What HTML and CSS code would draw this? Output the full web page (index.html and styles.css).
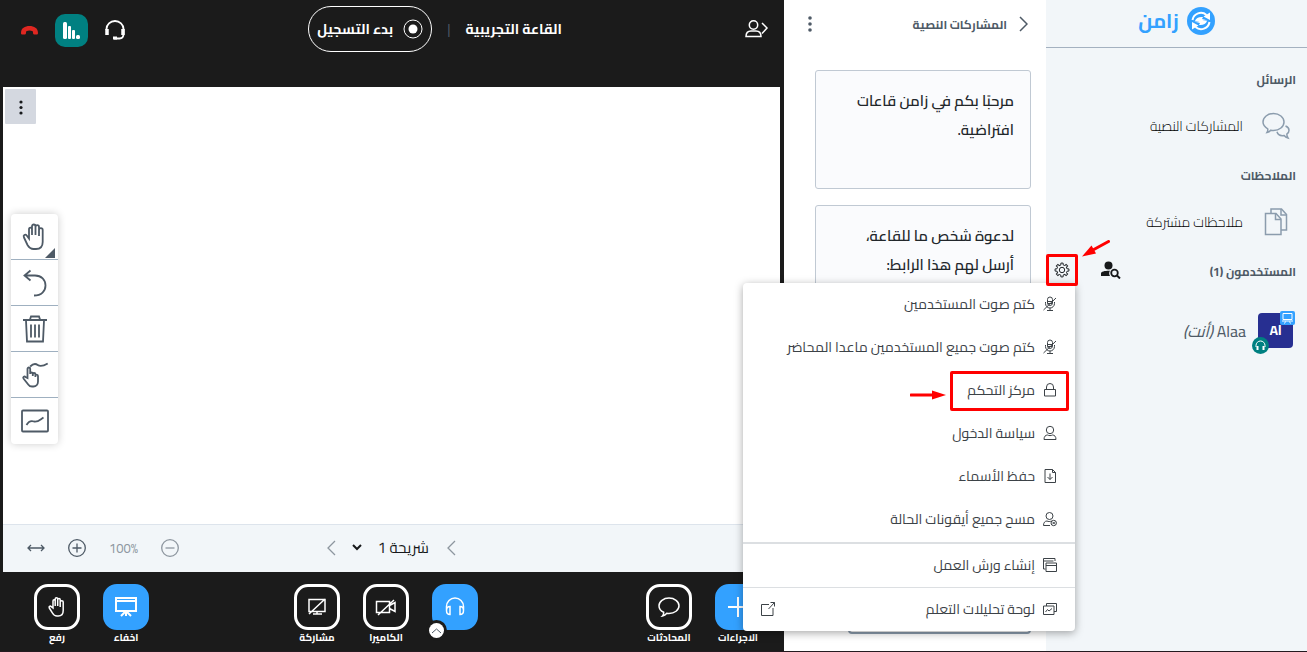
FILE: index.html
```html
<!DOCTYPE html>
<html lang="ar" dir="rtl">
<head>
    <meta charset="UTF-8"/>
    <meta name="viewport" content="width=device-width, initial-scale=1"/>
    <title>زامن</title>
    <link rel="stylesheet" href="styles.css">
</head>
<body>

<!-- users sidebar -->
<aside class="sidebar">
    <div class="brand">
        <svg class="brand-mark" width="28" height="28" viewBox="0 0 28 28">
            <circle cx="14" cy="14" r="14" fill="#33a1ff"/>
            <g fill="none" stroke="#fff" stroke-width="2">
                <path d="M5.500 13a8.500 8.500 0 0 1 14-5"/>
                <path d="M22.500 15a8.500 8.500 0 0 1-14 5"/>
            </g>
            <g fill="#fff">
                <path d="M16.500 9.500l6.500-4v7.500z"/>
                <path d="M11.500 18.500l-6.500 4V15z"/>
                <path d="M8 14c1-3 4-4.500 8-4l-1 2 6 1.500c-4 0-5 .5-7 .5z"/>
                <path d="M20 14c-1 3-4 4.500-8 4l1-2-6-1.500c4 0 5-.5 7-.5z"/>
            </g>
        </svg>
        <span>زامن</span>
    </div>

    <h2 class="side-title">الرسائل</h2>
    <a class="side-row" href="#">
        <span class="side-icon">
            <svg width="28" height="28" viewBox="0 0 28 28" class="line">
                <path d="M5 20.500c.8-1.300 1-2.300.7-3.700C3 15.200 1 12.800 1 10 1 5.300 5.700 1.500 11.500 1.500S22 5.300 22 10s-4.700 8.500-10.500 8.500c-1 0-1.800-.1-2.700-.3-1 1.200-2.200 2-3.800 2.300z"/>
                <path d="M23.500 14c2.200.8 3.500 2.300 3.500 4.200 0 1.800-.8 3-2.200 3.900 0 1.500.4 2.700 1.200 3.900-1.700-.4-2.900-1.200-3.800-2.500-3.500.6-6.400-.8-7.200-3.700"/>
            </svg>
        </span>
        <span>المشاركات النصية</span>
    </a>

    <h2 class="side-title">الملاحظات</h2>
    <a class="side-row" href="#">
        <span class="side-icon">
            <svg width="24" height="28" viewBox="0 0 24 28" class="line">
                <path d="M7 5V1h10.500l5 5.500V22H17"/>
                <path d="M17 1v6h5.500"/>
                <path d="M1.500 5.500H12l5 5.500v15.500H1.500z"/>
                <path d="M11.500 5.500v6H17"/>
            </svg>
        </span>
        <span>ملاحظات مشتركة</span>
    </a>

    <div class="users-head">
        <h2 class="side-title">المستخدمون (1)</h2>
        <button class="bare search" aria-label="بحث">
            <svg width="20" height="18" viewBox="0 0 20 18">
                <circle cx="7.500" cy="4.500" r="4" fill="#17191b"/>
                <path d="M0 15v-2.500C0 10.500 4 9.700 9 9.800 7.800 11.500 8 13.500 9 15z" fill="#17191b"/>
                <circle cx="13.500" cy="12" r="3.300" fill="none" stroke="#17191b" stroke-width="1.800"/>
                <path d="M16 14.500l3 3" stroke="#17191b" stroke-width="2"/>
            </svg>
        </button>
        <div class="manage">
            <button class="bare gear marked" aria-label="إدارة المستخدمين">
                <svg width="16" height="16" viewBox="-8 -8 16 16" fill="none" stroke="#22272b">
                    <defs>
                        <path id="tooth" d="M5.070-1.170L6.910-1.100V1.100L5.070 1.170A5.200 5.200 0 0 1 4.410 2.760"/>
                    </defs>
                    <use href="#tooth"/>
                    <use href="#tooth" transform="rotate(45)"/>
                    <use href="#tooth" transform="rotate(90)"/>
                    <use href="#tooth" transform="rotate(135)"/>
                    <use href="#tooth" transform="rotate(180)"/>
                    <use href="#tooth" transform="rotate(225)"/>
                    <use href="#tooth" transform="rotate(270)"/>
                    <use href="#tooth" transform="rotate(315)"/>
                    <circle r="2.700"/>
                </svg>
            </button>

            <ul class="menu">
                <li><button>
                    <svg width="14" height="16" viewBox="0 0 14 16"><path d="M4.500 7V3.500a2.500 2.500 0 0 1 5 0V7a2.500 2.500 0 0 1-5 0z"/><path d="M2.500 6v1.500a4.500 4.500 0 0 0 9 0V6M7 12v2.500M4 14.500h6M.5 14L13 2M5 5.500h4M5 7.500h4"/></svg>
                    كتم صوت المستخدمين</button></li>
                <li><button>
                    <svg width="14" height="16" viewBox="0 0 14 16"><path d="M4.500 7V3.500a2.500 2.500 0 0 1 5 0V7a2.500 2.500 0 0 1-5 0z"/><path d="M2.500 6v1.500a4.500 4.500 0 0 0 9 0V6M7 12v2.500M4 14.500h6M.5 14L13 2M5 5.500h4M5 7.500h4"/></svg>
                    كتم صوت جميع المستخدمين ماعدا المحاضر</button></li>
                <li><button>
                    <svg width="14" height="16" viewBox="0 0 14 16"><path d="M1.500 7.500h11v6.500h-11zM3.500 7.500V5a3.500 3.500 0 0 1 7 0v2.500"/></svg>
                    مركز التحكم</button>
                    <span class="mark"></span>
                    <svg class="arrow-row" width="36" height="10" viewBox="0 0 36 10"><path class="shaft" d="M1 5h24"/><path class="head" d="M22 0.500L36 5 22 9.500z"/></svg>
                </li>
                <li><button>
                    <svg width="14" height="16" viewBox="0 0 14 16"><circle cx="7" cy="5" r="3.700"/><path d="M1 14.500c0-3 1.500-4.500 3.500-4.500 1.500.8 3.500.8 5 0 2 0 3.500 1.500 3.500 4.500z"/></svg>
                    سياسة الدخول</button></li>
                <li><button>
                    <svg width="14" height="16" viewBox="0 0 14 16"><path d="M2 1.500h7.500l3 3v10H2zM9.500 1.500v3h3M7 5.500v6M4.500 9L7 11.500 9.500 9"/></svg>
                    حفظ الأسماء</button></li>
                <li><button>
                    <svg width="14" height="16" viewBox="0 0 14 16"><circle cx="6.500" cy="5" r="3.500"/><path d="M7 14.500H.5c0-3 1.500-4.500 3.500-4.500 1.300.7 3 .7 4.500 0"/><circle cx="10.700" cy="12" r="2.700"/><path d="M9.500 10.800l2.400 2.400M11.900 10.800l-2.400 2.400"/></svg>
                    مسح جميع أيقونات الحالة</button></li>
                <li class="group"><button>
                    <svg width="14" height="16" viewBox="0 0 14 16"><path d="M2.500 12H.5V1.500h11.500V4M.5 4h10M3 6h10.500v8.500H3zM3 8.500h10.500"/></svg>
                    إنشاء ورش العمل</button></li>
                <li class="split"><button>
                    <svg width="14" height="16" viewBox="0 0 14 16"><path d="M3.500 5V2.500h10v8H11M.5 5H11v8.500H.5zM2.500 11l2-2.500 1.500 1.500 3-2.500"/></svg>
                    لوحة تحليلات التعلم
                    <svg class="external" width="16" height="16" viewBox="0 0 16 16"><path d="M9 3.500H1.500v11H13V7M8.500 8l6-6.500M10.500 1.500h4v4"/></svg></button></li>
            </ul>

            <svg class="arrow-gear" width="28" height="18" viewBox="0 0 28 18"><path class="shaft" d="M26.500 1.500L10 10.500"/><path class="head" d="M0 16.500L9.500 5.500l4.500 8z"/></svg>
        </div>
    </div>

    <div class="user">
        <span class="avatar">Al
            <svg class="badge-presenter" width="15" height="14" viewBox="0 0 15 14"><rect width="15" height="14" rx="2" fill="#33a1ff"/><path d="M3 2.500h9v6H3zM2 10h11M4.500 12.500l1-2M10.500 12.500l-1-2" fill="none" stroke="#fff"/></svg>
            <svg class="badge-audio" width="17" height="17" viewBox="0 0 17 17"><circle cx="8.500" cy="8.500" r="8.500" fill="#008081"/><path d="M4 10V8.500a4.500 4.500 0 0 1 9 0V10" fill="none" stroke="#fff"/><path d="M5.500 9v4M11.500 9v4" fill="none" stroke="#fff" stroke-width="2"/></svg>
        </span>
        <span>Alaa <i>(أنت)</i></span>
    </div>
</aside>

<!-- public chat -->
<section class="chat">
    <header class="chat-head">
        <button class="bare chat-close">
            <svg width="9" height="16" viewBox="0 0 9 16"><path d="M1 1l7 7-7 7"/></svg>
            المشاركات النصية
        </button>
        <button class="bare" aria-label="خيارات">
            <svg width="6" height="16" viewBox="0 0 6 16" fill="#4e5a66"><circle cx="3" cy="2" r="1.800"/><circle cx="3" cy="8" r="1.800"/><circle cx="3" cy="14" r="1.800"/></svg>
        </button>
    </header>
    <p class="message">مرحبًا بكم في زامن قاعات افتراضية.</p>
    <p class="message invite">لدعوة شخص ما للقاعة، أرسل لهم هذا الرابط:</p>
    <form class="composer"><textarea aria-label="رسالة"></textarea></form>
</section>

<!-- presentation -->
<main class="room">
    <header class="navbar">
        <button class="bare" aria-label="المستخدمون">
            <svg width="24" height="18" viewBox="0 0 24 18" fill="none" stroke="#fff" stroke-width="1.500"><circle cx="8.500" cy="5" r="4.200"/><path d="M1 16.500c0-3.500 2-5.500 5-5.500h5c3 0 5 2 5 5.500z"/><path d="M17 3l5 5-5 5.500"/></svg>
        </button>
        <div class="room-title">
            <h1>القاعة التجريبية</h1>
            <span class="bar">|</span>
            <button class="record">
                <svg width="20" height="20" viewBox="0 0 20 20"><circle cx="10" cy="10" r="9" fill="none" stroke="#fff"/><circle cx="10" cy="10" r="4.500" fill="#fff"/></svg>
                بدء التسجيل
            </button>
        </div>
        <div class="nav-end">
            <button class="bare" aria-label="الصوت">
                <svg width="20" height="20" viewBox="0 0 20 20" fill="none" stroke="#fff" stroke-width="1.800"><path d="M1.500 10V9a8.500 8 0 0 1 17 0v5c0 3-1.500 4.500-4 4.500H9"/><path d="M2 9v6M18 9v6" stroke-width="3.500"/><path d="M8 18h4" stroke-width="3"/></svg>
            </button>
            <button class="stats" aria-label="الاتصال">
                <svg width="17" height="17" viewBox="0 0 17 17" fill="#fff"><rect x="0" width="4" height="17" rx="1.500"/><rect x="5" y="4" width="3" height="13" rx="1"/><rect x="9" y="8" width="3" height="9" rx="1"/><rect x="13" y="13" width="4" height="4" rx="1.500"/></svg>
            </button>
            <button class="bare" aria-label="مغادرة">
                <svg width="17" height="9" viewBox="0 0 17 9" fill="#df2721"><path d="M0 7C0 2 4 0 8.500 0S17 2 17 7c0 1-.6 1.500-1.500 1.500h-2c-1 0-1.500-.6-1.500-1.500V5.500C9.500 4.300 7.500 4.300 5 5.500V7c0 .9-.5 1.500-1.500 1.500h-2C.6 8.500 0 8 0 7z"/></svg>
            </button>
        </div>
    </header>

    <div class="board">
        <button class="board-menu" aria-label="خيارات العرض">
            <svg width="4" height="16" viewBox="0 0 4 16" fill="#17191b"><circle cx="2" cy="3" r="1.600"/><circle cx="2" cy="8.500" r="1.600"/><circle cx="2" cy="14" r="1.600"/></svg>
        </button>
        <div class="tools">
            <button class="has-more" aria-label="تحريك">
                <svg width="28" height="28" viewBox="0 0 28 28"><path d="M8 15.500V6.500c0-2.500 3-2.500 3 0V12 3.500c0-2.700 3.500-2.700 3.500 0V12 4c0-2.500 3.500-2.500 3.500 0v9-6c0-2.500 3.700-2.500 3.700 0V19c0 4.500-2.500 7-6.700 7h-2.500c-3 0-4.500-1.500-6-4L3 14.500c-1.200-2.200 1.300-3.800 2.700-2z"/></svg>
            </button>
            <button aria-label="تراجع">
                <svg width="28" height="28" viewBox="0 0 28 28"><path d="M9.500 1.500L3.500 6.500l6 5M4 6.500h10c6.500 0 10.500 4.500 10.500 10s-4 10-11.500 10"/></svg>
            </button>
            <button aria-label="حذف">
                <svg width="28" height="28" viewBox="0 0 28 28"><path d="M2 5h24M9 4.500l1-3h8l1 3M5 5.500l1 21h16l1-21M10 9.500v13M14 9.500v13M18 9.500v13"/></svg>
            </button>
            <button aria-label="كتابة مشتركة">
                <svg width="28" height="28" viewBox="0 0 28 28"><path d="M6.500 17V8c0-2 2.700-2 2.700 0v5c0-2 2.600-2 2.600 0v2-1.500c0-2 2.600-2 2.600 0V16v-1c0-2 2.600-1.800 2.600 0v5.500c0 3-2 5-4.500 5H11c-2 0-3-.7-4-2.300L2.500 17.500c-1-1.600 1-2.700 2-1.500zM9.200 5.500c3-3 5.500-3 7.500-1.500s5 1.500 10-1.500"/></svg>
            </button>
            <button aria-label="لوحة">
                <svg width="28" height="28" viewBox="0 0 28 28"><rect x="1" y="3.500" width="26" height="21" rx="1"/><path d="M5.500 18c2-3.500 4.500-4.500 7.500-3.500 4 .7 5-1 9.500-4"/></svg>
            </button>
        </div>
    </div>

    <div class="slide-bar">
        <div></div>
        <div class="slide-nav">
            <button class="bare" aria-label="السابق"><svg width="9" height="16" viewBox="0 0 9 16"><path d="M8 1L1 8l7 7"/></svg></button>
            <select aria-label="الشريحة"><option>شريحة 1</option></select>
            <button class="bare" aria-label="التالي"><svg width="9" height="16" viewBox="0 0 9 16"><path d="M8 1L1 8l7 7"/></svg></button>
        </div>
        <div class="zoom">
            <button class="bare dim" aria-label="تصغير"><svg width="18" height="18" viewBox="0 0 18 18"><circle cx="9" cy="9" r="8.300"/><path d="M4.500 9h9"/></svg></button>
            <span class="percent" dir="ltr">100%</span>
            <button class="bare" aria-label="تكبير"><svg width="18" height="18" viewBox="0 0 18 18"><circle cx="9" cy="9" r="8.300"/><path d="M4.500 9h9M9 4.500v9"/></svg></button>
            <button class="bare" aria-label="ملاءمة"><svg width="18" height="8" viewBox="0 0 18 8"><path d="M1 4h16M4 1L1 4l3 3M14 1l3 3-3 3"/></svg></button>
        </div>
    </div>

    <footer class="actions">
        <div class="actions-start">
            <button class="action filled"><span><svg width="24" height="24" viewBox="0 0 24 24"><path class="bold" d="M12 2v20M2 12h20"/></svg></span>الاجراءات</button>
            <button class="action"><span><svg width="24" height="24" viewBox="0 0 24 24"><path d="M5.500 21c1-1 1.300-2.200 1.200-3.700C3.600 16 2 13.500 2 10.800 2 6.500 6.500 3 12 3s10 3.500 10 7.800-4.500 7.700-10 7.700c-.8 0-1.500 0-2.200-.2-1.200 1.500-2.500 2.400-4.300 2.700z"/></svg></span>المحادثات</button>
        </div>
        <div class="actions-mid">
            <div class="audio">
                <button class="action filled" aria-label="الصوت"><span><svg width="24" height="24" viewBox="0 0 24 24"><path d="M3.500 15V11.500a8.500 8.500 0 0 1 17 0V15M7 11.500v8c-2 0-3.500-1.500-3.500-4s1.500-4 3.500-4zM17 11.500v8c2 0 3.500-1.500 3.500-4s-1.500-4-3.500-4z"/></svg></span></button>
                <button class="more" aria-label="أجهزة الصوت"><svg width="11" height="6" viewBox="0 0 11 6"><path d="M1 5l4.500-4L10 5"/></svg></button>
            </div>
            <button class="action"><span><svg width="24" height="24" viewBox="0 0 24 24"><path d="M2.500 6.500h13v11h-13zM15.500 10.500l5.500-3v9l-5.500-3M4 20L20 5"/></svg></span>الكاميرا</button>
            <button class="action"><span><svg width="24" height="24" viewBox="0 0 24 24"><path d="M4 4.500h16v12H4zM4 19L20 4M8 19h9M12 16.500V19"/></svg></span>مشاركة</button>
        </div>
        <div class="actions-end">
            <button class="action filled"><span><svg width="24" height="24" viewBox="0 0 24 24"><path class="bold" d="M2 3h20v13H2zM2 6h20M7 21l4-4M17 21l-4-4M12 17v4"/></svg></span>اخفاء</button>
            <button class="action"><span><svg width="24" height="24" viewBox="0 0 24 24"><path d="M8 13V6c0-1.800 2.200-1.800 2.200 0v5-7c0-1.800 2.500-1.800 2.500 0v7-6.300c0-1.700 2.500-1.700 2.500 0V12 7c0-1.700 3-1.700 3 0v8.500c0 3.500-1.800 5.500-5 5.500H12c-2 0-3.500-1-4.500-3L4.300 13c-.8-1.500.8-2.500 2-1.300z"/></svg></span>رفع</button>
        </div>
    </footer>
</main>

</body>
</html>
```

FILE: styles.css
```css
* {
    box-sizing: border-box;
}

body {
    display: flex;
    margin: 0;
    min-height: 100vh;
    font-family: "Cairo", "Open Sans", "DejaVu Sans Condensed", "DejaVu Sans", sans-serif;
    font-size: 14px;
    color: #22272b;
    background: #fff;
    border-bottom: 1px solid #241a20;
}

h1, h2, p, ul {
    margin: 0;
    padding: 0;
}

button, select, textarea {
    font: inherit;
    color: inherit;
}

button {
    cursor: pointer;
}

svg {
    display: block;
    flex: none;
}

.bare {
    padding: 0;
    border: 0;
    background: none;
}

/* sidebar */
.sidebar {
    flex: 0 0 261px;
    background: #f2f6f9;
}

.brand {
    display: flex;
    justify-content: center;
    align-items: center;
    gap: 8px;
    height: 48px;
    padding-bottom: 6px;
    border-bottom: 1px solid #a4b1c0;
    color: #33a1ff;
    font-size: 20px;
    font-weight: bold;
    line-height: 40px;
}

.side-title {
    margin: 15px 11px 11px;
    font-size: 12px;
    line-height: 22px;
    font-weight: bold;
    color: #4e5a66;
}

.brand + .side-title {
    margin-top: 21px;
}

.side-row {
    display: flex;
    align-items: center;
    gap: 15px;
    height: 48px;
    padding: 0 14px;
    color: #000;
    font-weight: 300;
    text-decoration: none;
}

.side-icon {
    display: flex;
    justify-content: center;
    width: 35px;
}

.line {
    fill: none;
    stroke: #8b9cad;
    stroke-width: 1.5;
}

.users-head {
    display: flex;
    align-items: center;
    height: 32px;
    margin-top: 8px;
}

.users-head .side-title {
    margin: 3px 11px 0 0;
}

.search {
    margin-right: auto;
    margin-left: 23px;
}

.manage {
    position: relative;
    z-index: 2;
}

.gear {
    display: flex;
    justify-content: center;
    align-items: center;
    width: 32px;
    height: 32px;
    position: relative;
    z-index: 2;
}

.marked {
    border: 3px solid #f00;
    border-radius: 2px;
}

.menu {
    position: absolute;
    top: 29px;
    right: 3px;
    width: 332px;
    background: #fff;
    border-radius: 4px;
    box-shadow: 0 2px 8px rgba(0, 0, 0, 0.35);
    list-style: none;
}

.menu li {
    position: relative;
}

.menu button {
    display: flex;
    align-items: center;
    gap: 8px;
    width: 100%;
    height: 43px;
    padding: 0 18px 2px 17px;
    border: 0;
    background: none;
    color: #3c4247;
    text-align: right;
    white-space: nowrap;
}

.menu button svg {
    fill: none;
    stroke: #3c4247;
}

.menu .group {
    margin-top: 1px;
    border-top: 2px solid #dcdfe2;
}

.menu .split {
    border-top: 1px solid #dcdfe2;
}

.menu .external {
    margin-right: auto;
}

.mark {
    position: absolute;
    top: 2px;
    right: 6px;
    width: 119px;
    height: 40px;
    border: 3px solid #f00;
    border-radius: 2px;
}

.arrow-row {
    position: absolute;
    top: 21px;
    right: 129px;
}

.arrow-gear {
    position: absolute;
    top: -14px;
    left: 36px;
}

.shaft {
    fill: none;
    stroke: #f00;
    stroke-width: 3;
    stroke-linecap: round;
}

.head {
    fill: #f00;
}

.user {
    display: flex;
    align-items: center;
    gap: 12px;
    margin-top: 27px;
    padding: 0 14px;
    font-size: 16px;
    color: #4e5a66;
}

.avatar {
    position: relative;
    width: 35px;
    height: 35px;
    border-radius: 4px;
    background: #272f91;
    color: #fff;
    font-size: 14px;
    font-weight: bold;
    line-height: 35px;
    text-align: center;
}

.badge-presenter {
    position: absolute;
    top: -2px;
    right: -2px;
}

.badge-audio {
    position: absolute;
    bottom: -6px;
    left: -6px;
}

/* chat */
.chat {
    display: flex;
    flex-direction: column;
    flex: 0 0 262px;
    padding: 0 15px 17px 31px;
}

.chat-head {
    display: flex;
    justify-content: space-between;
    align-items: center;
    height: 48px;
    margin: 0 3px 22px -8px;
}

.chat-close {
    display: flex;
    align-items: center;
    gap: 12px;
    font-size: 12px;
    font-weight: bold;
    color: #4e5a66;
}

.chat-close svg {
    fill: none;
    stroke: #4e5a66;
    stroke-width: 1.5;
}

.message {
    min-height: 119px;
    margin-bottom: 16px;
    padding: 15px 16px;
    border: 1px solid #c0c9d3;
    border-radius: 3px;
    background: #fafbfd;
    font-size: 15px;
    font-weight: 600;
    line-height: 29px;
}

.invite {
    min-height: 240px;
}

.composer {
    margin-top: auto;
    padding-left: 33px;
}

.composer textarea {
    display: block;
    width: 100%;
    height: 40px;
    border: 2px solid #8b9cad;
    border-radius: 4px;
    resize: none;
}

/* room */
.room {
    display: flex;
    flex-direction: column;
    flex: 1;
    min-width: 0;
    padding: 0 4px 0 3px;
    background: #1b1b1b;
    color: #fff;
}

.navbar {
    display: flex;
    justify-content: space-between;
    height: 87px;
    padding: 6px 11px 35px 18px;
}

.room-title, .nav-end {
    display: flex;
    align-items: center;
}

.room-title {
    gap: 15px;
}

.room-title h1 {
    font-size: 14px;
    font-weight: bold;
}

.bar {
    color: #4e5a66;
}

.record {
    display: flex;
    align-items: center;
    gap: 10px;
    height: 46px;
    padding: 0 8px;
    border: 1px solid #fff;
    border-radius: 23px;
    background: none;
    font-weight: bold;
}

.nav-end {
    gap: 17px;
    padding-top: 2px;
}

.stats {
    display: grid;
    place-items: center;
    width: 33px;
    height: 33px;
    padding: 0;
    border: 0;
    border-radius: 10px;
    background: #008081;
}

.board {
    flex: 1;
    padding: 2px;
    background: #fff;
    direction: ltr;
}

.board-menu {
    display: grid;
    place-items: center;
    width: 31px;
    height: 35px;
    padding: 0;
    border: 0;
    border-radius: 1px;
    background: #d4d8e0;
}

.tools {
    display: flex;
    flex-direction: column;
    width: 47px;
    margin: 90px 6px 24px;
    border-radius: 4px;
    background: #fff;
    box-shadow: 0 0 8px rgba(0, 0, 0, 0.2);
}

.tools button {
    position: relative;
    display: grid;
    place-items: center;
    height: 46px;
    padding: 0;
    border: 0;
    border-bottom: 1px solid #9fb0c0;
    background: none;
}

.tools button:last-child {
    border-bottom: 0;
}

.tools svg {
    fill: none;
    stroke: #4e5a66;
    stroke-width: 1.8;
}

.has-more::after {
    content: "";
    position: absolute;
    right: 3px;
    bottom: 1px;
    border: 5px solid transparent;
    border-right-color: #4e5a66;
    border-bottom-color: #4e5a66;
}

.slide-bar {
    display: grid;
    grid-template-columns: 1fr auto 1fr;
    align-items: center;
    height: 48px;
    padding-bottom: 2px;
    border-top: 1px solid #dde4ec;
    background: #f2f6f9;
    color: #17191b;
}

.slide-bar svg {
    fill: none;
    stroke: #4e5a66;
    stroke-width: 1.3;
}

.slide-nav {
    display: flex;
    align-items: center;
    gap: 14px;
}

.slide-nav svg, .slide-bar .dim svg {
    stroke: #8d969f;
}

.slide-nav select {
    width: 83px;
    border: 0;
    background: transparent;
    font-size: 15px;
}

.zoom {
    display: flex;
    justify-content: flex-end;
    align-items: center;
    gap: 23px;
    padding-left: 24px;
}

.percent {
    font-size: 13px;
    color: #8d969f;
}

.actions {
    display: grid;
    grid-template-columns: 1fr auto 1fr;
    height: 79px;
    padding: 12px 11px 0 0;
}

.actions-start, .actions-mid, .actions-end {
    display: flex;
    gap: 23px;
}

.actions-start {
    padding-right: 8px;
}

.actions-end {
    justify-content: flex-end;
    padding-left: 31px;
}

.action {
    display: flex;
    flex-direction: column;
    align-items: center;
    width: 46px;
    padding: 0;
    border: 0;
    background: none;
    font-size: 10px;
    font-weight: bold;
    line-height: 16px;
    white-space: nowrap;
}

.action span {
    display: grid;
    place-items: center;
    width: 46px;
    height: 46px;
    border: 3px solid #fff;
    border-radius: 14px;
}

.action.filled span {
    border-color: #33a1ff;
    background: #33a1ff;
}

.action svg {
    fill: none;
    stroke: #fff;
    stroke-width: 1.5;
}

.action .bold {
    stroke-width: 2;
}

.audio {
    position: relative;
}

.more {
    position: absolute;
    top: 39px;
    left: -3px;
    display: grid;
    place-items: center;
    width: 15px;
    height: 15px;
    padding: 0;
    border: 0;
    border-radius: 50%;
    background: #fff;
    box-shadow: 0 0 0 3px #1b1b1b;
}

.more svg {
    fill: none;
    stroke: #4e5a66;
}
```
